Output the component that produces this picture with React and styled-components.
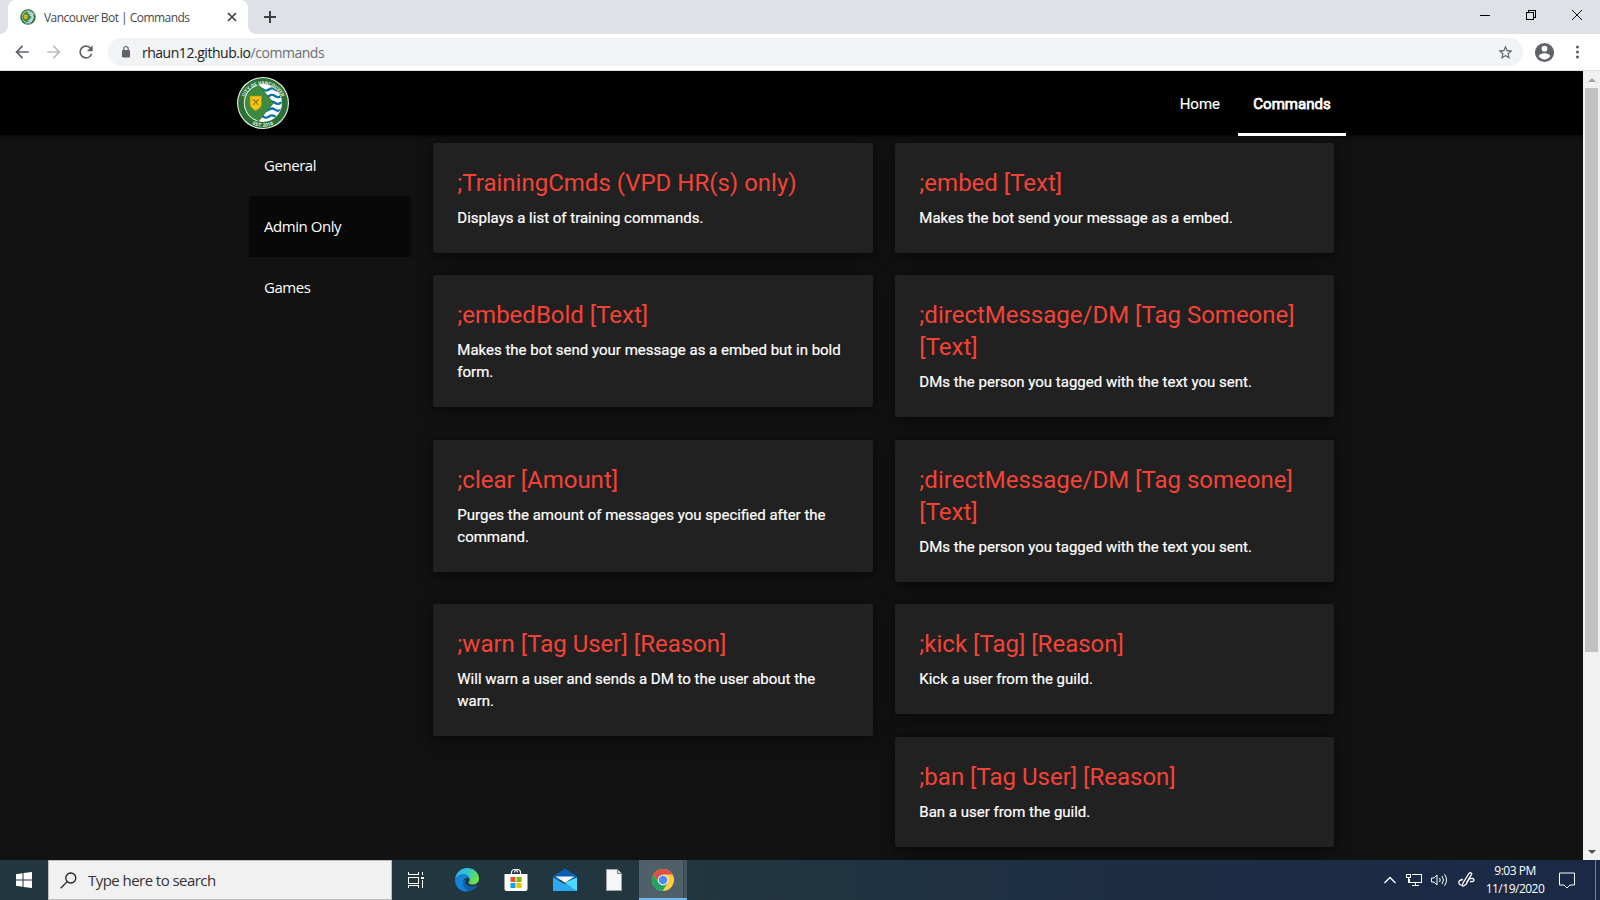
import React from "react";
import styled, { createGlobalStyle, css } from "styled-components";

const ui = '"Open Sans", "Noto Sans", sans-serif';

const Global = createGlobalStyle`
  * { box-sizing: border-box; }
  body { margin: 0; background: #121212; overflow: hidden; }
  svg { display: block; flex: none; }
`;

const Screen = styled.div`
  width: 1600px;
  height: 900px;
  display: flex;
  flex-direction: column;
  overflow: hidden;
  font-family: Roboto, sans-serif;
`;

/* ---------- browser chrome ---------- */
const TabStrip = styled.div`
  height: 34px;
  flex: none;
  display: flex;
  align-items: stretch;
  background: #dee1e6;
  padding-left: 8px;
`;
const BrowserTab = styled.div`
  position: relative;
  width: 240px;
  display: flex;
  align-items: center;
  padding: 0 10px 0 12px;
  background: #fff;
  border-radius: 8px 8px 0 0;
  &::before, &::after {
    content: "";
    position: absolute;
    bottom: 0;
    width: 8px;
    height: 8px;
  }
  &::before { left: -8px; background: radial-gradient(circle at 0 0, transparent 7.5px, #fff 8px); }
  &::after { right: -8px; background: radial-gradient(circle at 100% 0, transparent 7.5px, #fff 8px); }
`;
const TabTitle = styled.span`
  flex: 1;
  margin-left: 8px;
  padding-top: 1px;
  font: 12px/16px ${ui};
  letter-spacing: -0.54px;
  color: #45494d;
  white-space: nowrap;
`;
const NewTab = styled.div`
  width: 44px;
  display: flex;
  align-items: center;
  justify-content: center;
`;
const WindowButtons = styled.div`
  margin-left: auto;
  display: flex;
`;
const WindowButton = styled.div`
  width: 46px;
  height: 29px;
  display: flex;
  align-items: center;
  justify-content: center;
`;
const Toolbar = styled.div`
  height: 37px;
  flex: none;
  display: flex;
  align-items: center;
  padding: 0 12px 0 12px;
  background: #fff;
  border-bottom: 1px solid #dcdfe1;
`;
const NavIcons = styled.div`
  display: flex;
  gap: 12px;
  width: 96px;
`;
const Omnibox = styled.div`
  width: 1416px;
  height: 28px;
  border-radius: 14px;
  background: #f1f3f4;
  display: flex;
  align-items: center;
  padding: 0 9px 0 11px;
`;
const Url = styled.span`
  flex: 1;
  margin-left: 9px;
  padding-top: 1px;
  font: 14px/20px ${ui};
  letter-spacing: -0.46px;
  color: #202124;
  span { color: #6c7074; }
`;
const ToolbarEnd = styled.div`
  display: flex;
  align-items: center;
  margin-left: 10.5px;
  gap: 12px;
`;

/* ---------- page ---------- */
const Viewport = styled.div`
  height: 789px;
  flex: none;
  display: flex;
  background: #121212;
`;
const Page = styled.div`
  width: 1583px;
  overflow: hidden;
`;
const SiteHeader = styled.header`
  position: relative;
  height: 64px;
  background: #000;
  display: flex;
  justify-content: space-between;
  padding: 0 237px;
  box-shadow: 0 2px 4px rgba(0, 0, 0, 0.5);
`;
const Brand = styled.div`
  padding-top: 6px;
`;
const SiteNav = styled.nav`
  display: flex;
`;
const NavLink = styled.a`
  height: 65px;
  padding: 0 15px;
  margin-left: 3px;
  font-size: 15px;
  line-height: 66px;
  color: #fff;
  -webkit-text-stroke: 0.15px #fff;
  ${(p) =>
    p.$active &&
    css`
      width: 108px;
      text-align: center;
      -webkit-text-stroke: 0.75px #fff;
      border-bottom: 3px solid #fff;
    `}
`;
const Body = styled.main`
  display: flex;
  padding: 0 0 0 249px;
`;
const Sidebar = styled.ul`
  width: 162.3px;
  margin: 0;
  padding: 0;
  list-style: none;
`;
const SideItem = styled.li`
  width: 162px;
  height: 61px;
  padding-left: 15px;
  font-family: ${ui};
  font-size: 15px;
  line-height: 61px;
  letter-spacing: -0.45px;
  color: #fff;
  background: ${(p) => (p.$active ? "#080808" : "transparent")};
`;
const Column = styled.div`
  width: ${(p) => p.$width}px;
  margin-left: 22px;
  padding-top: 7.9px;
  display: flex;
  flex-direction: column;
`;
const Card = styled.article`
  padding: 24px;
  margin-bottom: ${(p) => p.$after || 22.5}px;
  border-radius: 2px;
  background: #212121;
  box-shadow: 0 2px 5px rgba(0, 0, 0, 0.26), 0 3px 20px rgba(0, 0, 0, 0.4);
`;
const CardTitle = styled.h2`
  margin: 0 0 8px;
  font-size: 24px;
  font-weight: 400;
  line-height: 32px;
  color: #f44336;
`;
const CardText = styled.p`
  margin: 0;
  font-size: 15px;
  line-height: 22px;
  color: #fff;
  -webkit-text-stroke: 0.2px #fff;
`;
const Scrollbar = styled.div`
  width: 17px;
  background: #f1f1f1;
  display: flex;
  flex-direction: column;
  align-items: center;
  justify-content: space-between;
`;
const ScrollThumb = styled.div`
  width: 13px;
  height: 564px;
  margin-bottom: auto;
  background: #c1c1c1;
`;
const ScrollButton = styled.div`
  height: 17px;
  width: 17px;
  display: flex;
  align-items: center;
  justify-content: center;
`;

/* ---------- taskbar ---------- */
const Taskbar = styled.footer`
  height: 40px;
  flex: none;
  display: flex;
  background: linear-gradient(90deg, #22373f 0%, #22363f 42%, #1d2e44 70%, #1a2945 100%);
`;
const Start = styled.div`
  width: 48px;
  display: flex;
  align-items: center;
  justify-content: center;
`;
const Search = styled.div`
  width: 344px;
  display: flex;
  align-items: center;
  padding-left: 11px;
  background: #f1f1f1;
  border: 1px solid #bcbcbc;
  font: 15px/20px ${ui};
  letter-spacing: -0.55px;
  color: #333;
`;
const SearchText = styled.span`
  margin-left: 11px;
`;
const Apps = styled.div`
  display: flex;
`;
const AppSlot = styled.div`
  width: ${(p) => p.$width || 49}px;
  display: flex;
  align-items: center;
  justify-content: center;
`;
const TaskViewSlot = styled(AppSlot)`
  padding-right: 2px;
`;
const ActiveSlot = styled(AppSlot)`
  background: linear-gradient(90deg, #506069 44px, #35474f 44px, #35474f 45px, #45565f 45px);
  border-bottom: 2px solid #76b9ed;
  padding-top: 1px;
  margin-left: 1px;
`;
const Tray = styled.div`
  margin-left: auto;
  display: flex;
  align-items: center;
  padding-right: 4px;
`;
const TrayIcons = styled.div`
  display: flex;
  align-items: center;
  gap: 9px;
`;
const Clock = styled.div`
  width: 78px;
  margin-right: 5px;
  text-align: center;
  font: 12px/18px ${ui};
  letter-spacing: -0.5px;
  color: #fff;
  white-space: nowrap;
`;
const ShowDesktop = styled.div`
  width: 1px;
  height: 40px;
  margin-left: 20px;
  background: #77808f;
`;

/* ---------- drawings ---------- */
const Crest = ({ size, id }) => (
  <svg width={size} height={size} viewBox="0 0 52 52">
    <defs>
      <clipPath id={`${id}c`}><circle cx="26" cy="26" r="18.6" /></clipPath>
      <path id={`${id}t`} d="M6 27.500a20 20 0 0 1 40 0" />
      <path id={`${id}b`} d="M2.200 26a23.800 23.800 0 0 0 47.600 0" />
    </defs>
    <circle cx="26" cy="26" r="26" fill="#e9f0e9" />
    <circle cx="26" cy="26" r="24.9" fill="#2b7034" />
    <circle cx="26" cy="26" r="19" fill="#fff" />
    <g clipPath={`url(#${id}c)`}>
      <g fill="none" stroke="#0b72a8" strokeWidth="2.300">
        {[12.5, 19, 25.8, 32.6, 39.5].map((y) => (
          <path key={y} d={`M20 ${y}q3 -2.200 6 0t6 0t6 0t6 0t6 0`} />
        ))}
      </g>
      <path d="M19 4.500L36.500 26 20 46 4 48V4z" fill="#3c8a3f" stroke="#2b7034" strokeWidth=".7" />
    </g>
    <path d="M20 8.200A18.800 18.800 0 0 0 20 43.800" fill="none" stroke="#e0eddf" strokeWidth="1" />
    <path d="M13 19h11.600v8q0 4-5.800 6.700-5.800-2.700-5.800-6.700z" fill="#f2c318" stroke="#b08c12" strokeWidth=".7" />
    <path d="M15.500 22.500l3.300 1.800 3.300-1.800M16.500 28l2.300-3.700 2.300 3.700" fill="none" stroke="#7a6510" strokeWidth="1" />
    <g fill="#e6efe6" fontFamily="Roboto, sans-serif" fontSize="4.800" fontWeight="700" textAnchor="middle">
      <text><textPath href={`#${id}t`} startOffset="50%">CITY OF VANCOUVER</textPath></text>
      <text><textPath href={`#${id}b`} startOffset="50%">EST. 2018</textPath></text>
    </g>
  </svg>
);

const Glyph = ({ d, size = 20, color = "#5f6368" }) => (
  <svg width={size} height={size} viewBox="0 0 24 24" fill={color}><path d={d} /></svg>
);

const Line = ({ w, h, d, color = "#fff", sw = 1, crisp }) => (
  <svg width={w} height={h} fill="none" stroke={color} strokeWidth={sw} shapeRendering={crisp ? "crispEdges" : "auto"}>
    <path d={d} />
  </svg>
);

const BACK = "M20 11H7.830l5.590-5.590L12 4l-8 8 8 8 1.410-1.410L7.830 13H20v-2z";
const FORWARD = "M12 4l-1.410 1.410L16.170 11H4v2h12.170l-5.580 5.590L12 20l8-8z";
const RELOAD = "M17.650 6.350A7.958 7.958 0 0 0 12 4a8 8 0 1 0 7.730 10h-2.080A5.990 5.990 0 0 1 12 18a6 6 0 1 1 0-12c1.660 0 3.140.690 4.220 1.780L13 11h7V4l-2.350 2.350z";
const STAR = "M22 9.240l-7.190-.620L12 2 9.190 8.630 2 9.240l5.460 4.730L5.820 21 12 17.270 18.180 21l-1.630-7.030L22 9.240zM12 15.400l-3.760 2.270 1-4.280-3.320-2.880 4.380-.380L12 6.100l1.710 4.040 4.380.380-3.320 2.880 1 4.280L12 15.400z";
const PERSON = "M12 2a10 10 0 1 0 0 20 10 10 0 0 0 0-20zm0 3a3 3 0 1 1 0 6 3 3 0 0 1 0-6zm0 14.200a7.200 7.200 0 0 1-6-3.220c.030-1.990 4-3.080 6-3.080 1.990 0 5.970 1.090 6 3.080a7.200 7.200 0 0 1-6 3.220z";

const Edge = () => (
  <svg width="24" height="24" viewBox="0 0 24 24">
    <defs>
      <linearGradient id="edgeTop" x1="0" y1="0" x2="1" y2=".5">
        <stop offset="0" stopColor="#2bb3e8" /><stop offset=".5" stopColor="#30c4d2" /><stop offset="1" stopColor="#6be347" />
      </linearGradient>
      <linearGradient id="edgeLow" x1="0" y1="0" x2="1" y2="1">
        <stop offset="0" stopColor="#1068b8" /><stop offset="1" stopColor="#0c59a4" />
      </linearGradient>
    </defs>
    <path d="M0 12C.5 5 5.500 0 12 0c7 0 12 5 12 10.500 0 4-3 6-6.500 6-2.500 0-4-.8-4-1.800 0-.7 1.200-1.200 1.200-3C14.700 9 12 6.500 8.500 6.500 4 6.500 1 9 0 12z" fill="url(#edgeTop)" />
    <path d="M0 12c1-3.800 4.500-6 8-6 4 0 6.700 2.500 6.700 5.200-.5-1-1.500-1.500-2.700-1.500-2 0-4 2-4 5 0 4.500 4 7.800 8.500 7.300C10 26 0 21.500 0 12z" fill="#1283d8" />
    <path d="M8.200 13.500C7 18.500 11 23.500 16 22.600c3-.9 5-2.600 6.200-4.600.3-.5-.1-.9-.6-.6-4.600 2.300-13 .6-11-5.900-1.200.3-2 1-2.400 2z" fill="url(#edgeLow)" />
  </svg>
);
const Store = () => (
  <svg width="24" height="24" viewBox="0 0 24 24">
    <path d="M7.500 7V4.500a3 3 0 0 1 6 0M10.500 4.500a3 3 0 0 1 6 0V7" fill="none" stroke="#fff" strokeWidth="1.200" />
    <path d="M.5 6h23v15q0 2-2 2h-19q-2 0-2-2z" fill="#fff" />
    <path d="M6.500 9h5v5h-5z" fill="#f25022" /><path d="M12.500 9h5v5h-5z" fill="#7fba00" />
    <path d="M6.500 15h5v5h-5z" fill="#00a4ef" /><path d="M12.500 15h5v5h-5z" fill="#ffb900" />
  </svg>
);
const Mail = () => (
  <svg width="24" height="24" viewBox="0 0 24 24">
    <path d="M0 8.500L12 .5l12 8V12H0z" fill="#0a5fb4" />
    <path d="M0 9.500l12 6.500 12-6.500V23H0z" fill="#2aa9ec" />
    <path d="M24 9.500V23L12 14.500z" fill="#50d9ff" />
    <path d="M2.500 8.500h19L12 14.800z" fill="#f4f4f4" />
  </svg>
);
const FileIcon = () => (
  <svg width="18" height="24" viewBox="0 0 18 24">
    <path d="M1.500 1.500h11l4 4v17h-15z" fill="#f5f6f7" stroke="#a2a5a7" />
    <path d="M12.500 1.500v4h4" fill="#dcdcdc" stroke="#777" />
  </svg>
);
const Chrome = () => (
  <svg width="24" height="24" viewBox="0 0 24 24">
    <circle cx="12" cy="12" r="11" fill="#ffcd42" />
    <path d="M2.500 6.500A11 11 0 0 1 21.500 6.500H12L7.200 14.800z" fill="#dd5144" />
    <path d="M2.500 6.500A11 11 0 0 0 11.500 23l5.200-8.300L12 17.500 7.200 14.800z" fill="#1da462" />
    <circle cx="12" cy="12" r="5.300" fill="#f1f1f1" />
    <circle cx="12" cy="12" r="4.300" fill="#4c8bf5" />
  </svg>
);

const leftCards = [
  [";TrainingCmds (VPD HR(s) only)", "Displays a list of training commands."],
  [";embedBold [Text]", "Makes the bot send your message as a embed but in bold form.", 32.5],
  [";clear [Amount]", "Purges the amount of messages you specified after the command.", 32.5],
  [";warn [Tag User] [Reason]", "Will warn a user and sends a DM to the user about the warn."],
];
const rightCards = [
  [";embed [Text]", "Makes the bot send your message as a embed."],
  [";directMessage/DM [Tag Someone] [Text]", "DMs the person you tagged with the text you sent."],
  [";directMessage/DM [Tag someone] [Text]", "DMs the person you tagged with the text you sent."],
  [";kick [Tag] [Reason]", "Kick a user from the guild."],
  [";ban [Tag User] [Reason]", "Ban a user from the guild."],
];

const CardColumn = ({ cards, width }) => (
  <Column $width={width}>
    {cards.map(([title, text, after]) => (
      <Card key={title} $after={after}>
        <CardTitle>{title}</CardTitle>
        <CardText>{text}</CardText>
      </Card>
    ))}
  </Column>
);

export default function App() {
  return (
    <Screen>
      <Global />
      <TabStrip>
        <BrowserTab>
          <Crest size={16} id="fav" />
          <TabTitle>Vancouver Bot | Commands</TabTitle>
          <Line w={12} h={12} d="M2 2l8 8M10 2l-8 8" color="#3c4043" sw={1.7} />
        </BrowserTab>
        <NewTab><Line w={12} h={12} d="M6 0v12M0 6h12" color="#3c4043" sw={2} /></NewTab>
        <WindowButtons>
          <WindowButton><Line w={10} h={10} d="M0 5.500h10" color="#000" crisp /></WindowButton>
          <WindowButton><Line w={10} h={10} d="M.5 2.500h7v7h-7zM2.500 2.500v-2h7v7h-2" color="#000" crisp /></WindowButton>
          <WindowButton><Line w={10} h={10} d="M0 0l10 10M10 0L0 10" color="#111" /></WindowButton>
        </WindowButtons>
      </TabStrip>
      <Toolbar>
        <NavIcons>
          <Glyph d={BACK} />
          <Glyph d={FORWARD} color="#babcbe" />
          <Glyph d={RELOAD} />
        </NavIcons>
        <Omnibox>
          <svg width="14" height="14" viewBox="0 0 14 14">
            <rect x="3" y="5" width="8" height="7.500" rx="1" fill="#5f6368" />
            <path d="M4.800 5.500V3.700a2.200 2.200 0 0 1 4.400 0v1.800" fill="none" stroke="#5f6368" strokeWidth="1.200" />
          </svg>
          <Url>rhaun12.github.io<span>/commands</span></Url>
          <Glyph d={STAR} size={17} />
        </Omnibox>
        <ToolbarEnd>
          <Glyph d={PERSON} size={23} />
          <svg width="20" height="20" fill="#5f6368">
            <circle cx="9.500" cy="5" r="1.600" /><circle cx="9.500" cy="10" r="1.600" /><circle cx="9.500" cy="15" r="1.600" />
          </svg>
        </ToolbarEnd>
      </Toolbar>

      <Viewport>
        <Page>
          <SiteHeader>
            <Brand><Crest size={52} id="logo" /></Brand>
            <SiteNav>
              <NavLink>Home</NavLink>
              <NavLink $active>Commands</NavLink>
            </SiteNav>
          </SiteHeader>
          <Body>
            <Sidebar>
              <SideItem>General</SideItem>
              <SideItem $active>Admin Only</SideItem>
              <SideItem>Games</SideItem>
            </Sidebar>
            <CardColumn cards={leftCards} width={440} />
            <CardColumn cards={rightCards} width={439} />
          </Body>
        </Page>
        <Scrollbar>
          <ScrollButton><svg width="8" height="4"><path d="M0 4l4-4 4 4z" fill="#a3a3a3" /></svg></ScrollButton>
          <ScrollThumb />
          <ScrollButton><svg width="8" height="4"><path d="M0 0l4 4 4-4z" fill="#505050" /></svg></ScrollButton>
        </Scrollbar>
      </Viewport>

      <Taskbar>
        <Start>
          <svg width="16" height="16" fill="#fff">
            <path d="M0 2.200l6.500-.9v6.200H0zM7.500 1.100L16 0v7.500H7.500zM0 8.500h6.500v6.200L0 13.800zM7.500 8.500H16V16l-8.500-1.100z" />
          </svg>
        </Start>
        <Search>
          <svg width="17" height="17" fill="none" stroke="#222" strokeWidth="1.300">
            <circle cx="10.800" cy="6" r="5" /><path d="M7.200 9.600L.7 16.200" />
          </svg>
          <SearchText>Type here to search</SearchText>
        </Search>
        <Apps>
          <TaskViewSlot $width={50}>
            <Line w={18} h={16} d="M1.500 0v2.500h10V0M1.500 5.500h10v6h-10zM1.500 16v-2.500h10V16M15.500 0v3M15.500 8v8M14 5.500h3M14 6.500h3" crisp />
          </TaskViewSlot>
          <AppSlot><Edge /></AppSlot>
          <AppSlot><Store /></AppSlot>
          <AppSlot><Mail /></AppSlot>
          <AppSlot><FileIcon /></AppSlot>
          <ActiveSlot $width={48}><Chrome /></ActiveSlot>
        </Apps>
        <Tray>
          <TrayIcons>
            <Line w={14} h={8} d="M1.500 7L7 1.500 12.500 7" sw={1.300} />
            <Line w={16} h={14} d="M5.500 1.500h10v8h-12v-4M6 12.500h7M9.500 9.500v3M.5 1.500h4v3h-4zM2.500 4.500v5" crisp />
            <Line w={17} h={14} d="M.5 5h2.500L6 2v10L3 9H.5zM8.500 5q1.500 2 0 4M11 3q3 4 0 8M13.500 1.200q4 5.800 0 11.600" />
            <Line w={19} h={18} d="M8 14q-4 3-2-2L12 2.500q2-2 2.800.5L9 13.500zM6 8.500Q1 9 2 12.500q1 2 3.500 1.500M12 8q5-1.500 5 1 0 2-4 1.500M9.500 11.500l5-8" sw={1.300} />
          </TrayIcons>
          <Clock>9:03 PM<br />11/19/2020</Clock>
          <svg width="16" height="17" fill="none" stroke="#fff">
            <path d="M.5.500h15v12h-4.500l-3 3-3-3H.5z" transform="translate(0 .5)" />
          </svg>
          <ShowDesktop />
        </Tray>
      </Taskbar>
    </Screen>
  );
}
